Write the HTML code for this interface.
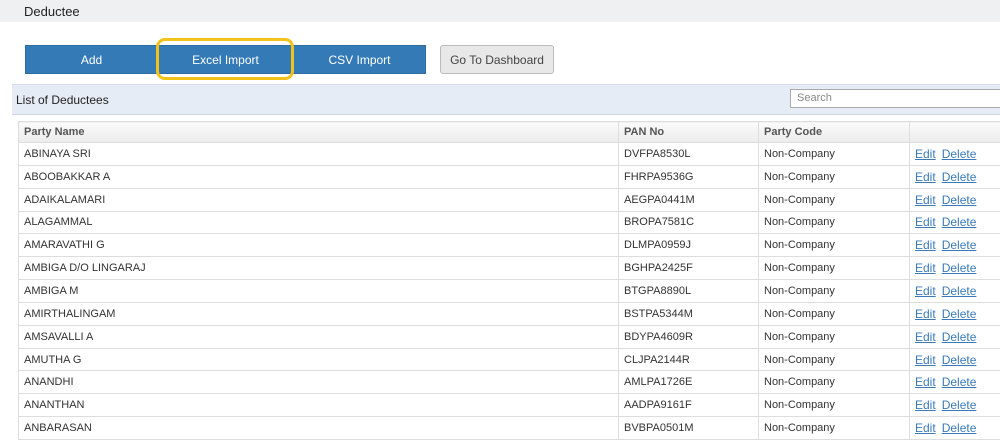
<!DOCTYPE html><html><head><style>
body{margin:0;width:1000px;height:434px;overflow:hidden;background:#fff;font-family:"Liberation Sans",sans-serif;position:relative}
.top{position:absolute;left:0;top:0;width:1000px;height:22px;background:#eef0f2;font-size:13px;color:#222}
.top span{position:absolute;left:24px;top:4px}
.btn{position:absolute;top:45px;height:29px;background:#337ab7;color:#fff;font-size:12px;text-align:center;line-height:29px;border:1px solid #2e6da4;box-sizing:border-box}
.hl{position:absolute;left:156px;top:38px;width:138px;height:42px;border:3px solid #f2c218;border-radius:9px;box-sizing:border-box}
.panel{position:absolute;left:12px;top:84px;width:990px;height:31px;background:#e6ecf5;border-top:1px solid #d5dde8;border-bottom:1px solid #cdd6e2;box-sizing:border-box}
.panel span{position:absolute;left:4px;top:8px;font-size:12px;color:#222}
.search{position:absolute;left:790px;top:89px;width:215px;height:19px;border:1px solid #aaa;background:#fff;box-sizing:border-box;font-size:11px;color:#888;padding:2px 6px}
table{position:absolute;left:18px;top:121px;border-collapse:collapse;font-size:11px;color:#333;width:990px}
td,th{border:1px solid #ddd;height:22.85px;padding:0 5px;text-align:left;font-weight:normal;white-space:nowrap;box-sizing:border-box}
th{background:linear-gradient(#fafafa,#ececec);color:#555;font-weight:bold;height:21px}
a{color:#3a7ab8;text-decoration:underline;margin-right:6px;font-size:12px}
</style></head><body>
<div class="top"><span>Deductee</span></div>
<div class="btn" style="left:25px;width:133px">Add</div>
<div class="btn" style="left:157px;width:137px">Excel Import</div>
<div class="btn" style="left:293px;width:133px">CSV Import</div>
<div class="btn" style="left:440px;width:114px;background:#e8e8e8;color:#444;border:1px solid #bbb;border-radius:3px">Go To Dashboard</div>
<div class="hl"></div>
<div class="panel"><span>List of Deductees</span></div>
<div class="search">Search</div>
<table>
<tr><th style="width:600px">Party Name</th><th style="width:140px">PAN No</th><th style="width:151px">Party Code</th><th></th></tr>
<tr><td>ABINAYA SRI</td><td>DVFPA8530L</td><td>Non-Company</td><td><a>Edit</a><a>Delete</a></td></tr>
<tr><td>ABOOBAKKAR A</td><td>FHRPA9536G</td><td>Non-Company</td><td><a>Edit</a><a>Delete</a></td></tr>
<tr><td>ADAIKALAMARI</td><td>AEGPA0441M</td><td>Non-Company</td><td><a>Edit</a><a>Delete</a></td></tr>
<tr><td>ALAGAMMAL</td><td>BROPA7581C</td><td>Non-Company</td><td><a>Edit</a><a>Delete</a></td></tr>
<tr><td>AMARAVATHI G</td><td>DLMPA0959J</td><td>Non-Company</td><td><a>Edit</a><a>Delete</a></td></tr>
<tr><td>AMBIGA D/O LINGARAJ</td><td>BGHPA2425F</td><td>Non-Company</td><td><a>Edit</a><a>Delete</a></td></tr>
<tr><td>AMBIGA M</td><td>BTGPA8890L</td><td>Non-Company</td><td><a>Edit</a><a>Delete</a></td></tr>
<tr><td>AMIRTHALINGAM</td><td>BSTPA5344M</td><td>Non-Company</td><td><a>Edit</a><a>Delete</a></td></tr>
<tr><td>AMSAVALLI A</td><td>BDYPA4609R</td><td>Non-Company</td><td><a>Edit</a><a>Delete</a></td></tr>
<tr><td>AMUTHA G</td><td>CLJPA2144R</td><td>Non-Company</td><td><a>Edit</a><a>Delete</a></td></tr>
<tr><td>ANANDHI</td><td>AMLPA1726E</td><td>Non-Company</td><td><a>Edit</a><a>Delete</a></td></tr>
<tr><td>ANANTHAN</td><td>AADPA9161F</td><td>Non-Company</td><td><a>Edit</a><a>Delete</a></td></tr>
<tr><td>ANBARASAN</td><td>BVBPA0501M</td><td>Non-Company</td><td><a>Edit</a><a>Delete</a></td></tr>
</table>
</body></html>
